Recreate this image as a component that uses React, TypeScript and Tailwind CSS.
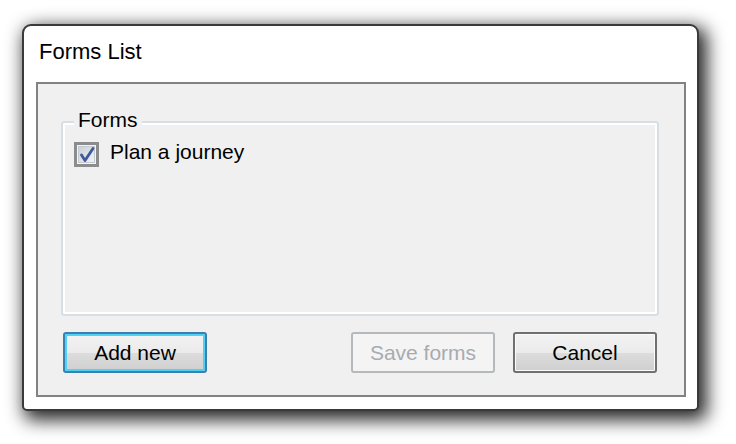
import React from "react";

function CheckBox() {
  return (
    <svg width="25" height="25" viewBox="0 0 25 25" className="shrink-0">
      <defs>
        <linearGradient id="cbFill" x1="0" y1="0" x2="1" y2="1">
          <stop offset="0" stopColor="#c9d0d8" />
          <stop offset="1" stopColor="#f2f3f5" />
        </linearGradient>
      </defs>
      <rect x="1.5" y="1.5" width="22" height="22" fill="#f4f4f4" stroke="#8c8c8c" strokeWidth="3" />
      <rect x="4.5" y="4.5" width="16" height="16" fill="url(#cbFill)" stroke="#c3c9d0" strokeWidth="1" />
      <path
        d="M7.5 13 L11 18.5 L19 6.5"
        fill="none"
        stroke="#405a98"
        strokeWidth="2.8"
        strokeLinecap="round"
        strokeLinejoin="round"
      />
    </svg>
  );
}

function App() {
  const font = "font-['Liberation_Sans',Arial,sans-serif]";
  return (
    <div className={`w-[736px] h-[444px] bg-white pt-[24px] pl-[22px] ${font}`}>
      <div className="w-[677px] h-[387px] flex flex-col bg-white border-2 border-[#3a3a3a] rounded-t-[9px] rounded-b-[5px] shadow-[5px_6px_18px_3px_rgba(0,0,0,0.85)]">
        <div className="pt-[14px] pl-[15px] h-[38px] leading-[24px] text-[22px] text-black">
          Forms List
        </div>
        <div className="mt-[18px] ml-3 mr-[11px] mb-3 flex-1 flex flex-col bg-[#f0f0f0] border-2 border-[#828282]">
          <div className="relative mt-[37px] ml-[23px] mr-[25px] h-[195px] border-2 border-[#d5dfe5] rounded-[3px] shadow-[inset_0_0_0_2px_#ffffff]">
            <span className="absolute left-[11px] top-[-15px] px-[4px] bg-[#f0f0f0] text-[21px] leading-[24px] text-black">
              Forms
            </span>
            <div className="flex items-start gap-[11px] pt-[19px] pl-[11px]">
              <CheckBox />
              <span className="-mt-[2px] text-[21px] leading-[24px] text-black">Plan a journey</span>
            </div>
          </div>
          <div className="flex items-center mt-[16px] ml-[25px] mr-[27px]">
            <button className="w-[144px] h-[41px] rounded-[3px] border-2 border-[#3c7fb1] shadow-[inset_0_0_0_2px_#4fd3f5] bg-[linear-gradient(#f2f2f2_0%,#ebebeb_50%,#dddddd_50%,#cfcfcf_100%)] text-[21px] text-black">
              Add new
            </button>
            <div className="flex-1" />
            <button className="w-[144px] h-[41px] rounded-[3px] border-2 border-[#b5b9bc] bg-[#f4f4f4] text-[21px] text-[#a7abb0]">
              Save forms
            </button>
            <button className="ml-[18px] w-[144px] h-[41px] rounded-[3px] border-2 border-[#707070] shadow-[inset_0_0_0_1px_#fbfbfb] bg-[linear-gradient(#f2f2f2_0%,#ebebeb_50%,#dddddd_50%,#cfcfcf_100%)] text-[21px] text-black">
              Cancel
            </button>
          </div>
        </div>
      </div>
    </div>
  );
}

export default App;
